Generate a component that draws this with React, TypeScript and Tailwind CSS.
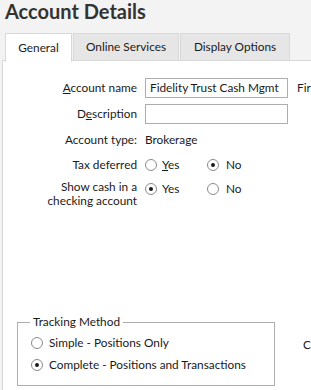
import React from "react";

const font = { fontFamily: 'Lato, "Noto Sans", sans-serif' };

function Radio({ checked }: { checked?: boolean }) {
  return (
    <span className="inline-flex items-center justify-center w-[12px] h-[12px] rounded-full border border-[#8a8a8a] bg-white shrink-0">
      {checked && <span className="w-[4px] h-[4px] rounded-full bg-[#1a1a1a]" />}
    </span>
  );
}

export default function App() {
  return (
    <div
      className="w-[311px] h-[390px] bg-[#f3f3f3] overflow-hidden flex flex-col text-[11.8px] text-[#1a1a1a]"
      style={font}
    >
      <div className="h-[33px] pl-[5px] pt-[0px] text-[20px] font-bold leading-[22px] text-[#333333] whitespace-nowrap">
        Account Details
      </div>
      <div className="flex pl-[5px] h-[28px] items-start relative z-10">
        <div className="w-[67px] h-[29px] bg-white border border-b-0 border-[#d9d9d9] flex items-center justify-center pb-[1px]">
          General
        </div>
        <div className="ml-[1px] w-[106px] h-[28px] bg-[#e6e6e6] border border-[#d9d9d9] flex items-center justify-center">
          Online Services
        </div>
        <div className="ml-[1px] w-[110px] h-[28px] bg-[#e6e6e6] border border-[#d9d9d9] flex items-center justify-center">
          Display Options
        </div>
      </div>
      <div className="flex-1 ml-[2px] -mt-[1px] bg-white border-l border-t border-[#d9d9d9] relative flex flex-col">
        <div className="mt-[17px] flex items-center h-[20px]">
          <div className="w-[142px] text-right pr-[8px] whitespace-nowrap">
            <span className="underline">A</span>ccount name
          </div>
          <div className="w-[143px] h-[20px] border border-[#adadad] flex items-center pl-[4px] whitespace-nowrap">
            Fidelity Trust Cash Mgmt
          </div>
          <div className="ml-[9px] whitespace-nowrap">Fir</div>
        </div>
        <div className="mt-[6px] flex items-center h-[20px]">
          <div className="w-[142px] text-right pr-[8px]">
            D<span className="underline">e</span>scription
          </div>
          <div className="w-[143px] h-[20px] border border-[#adadad]" />
        </div>
        <div className="mt-[7px] flex items-center h-[18px]">
          <div className="w-[142px] text-right pr-[8px]">Account type:</div>
          <div>Brokerage</div>
        </div>
        <div className="mt-[7px] flex items-center h-[18px]">
          <div className="w-[142px] text-right pr-[8px]">Tax deferred</div>
          <Radio />
          <span className="ml-[5px] w-[45px]">
            <span className="underline">Y</span>es
          </span>
          <Radio checked />
          <span className="ml-[7px]">No</span>
        </div>
        <div className="mt-[6px] flex items-start">
          <div className="w-[142px] text-right pr-[8px] leading-[14px]">
            Show cash in a
            <br />
            checking account
          </div>
          <div className="flex items-center h-[17px]">
            <Radio checked />
            <span className="ml-[5px] w-[45px]">Yes</span>
            <Radio />
            <span className="ml-[7px]">No</span>
          </div>
        </div>
        <div className="flex-1" />
        <div className="flex items-start mb-[4px]">
          <div className="ml-[14px] w-[261px] h-[64px] border border-[#adadad] relative flex flex-col pl-[13px] pt-[11px] gap-[4px]">
            <div className="absolute -top-[9px] left-[12px] bg-white px-[3px] leading-[16px]">
              Tracking Method
            </div>
            <div className="flex items-center">
              <Radio />
              <span className="ml-[6px]">Simple - Positions Only</span>
            </div>
            <div className="flex items-center">
              <Radio checked />
              <span className="ml-[6px]">Complete - Positions and Transactions</span>
            </div>
          </div>
          <div className="ml-[28px] mt-[14px]">C</div>
        </div>
      </div>
    </div>
  );
}
